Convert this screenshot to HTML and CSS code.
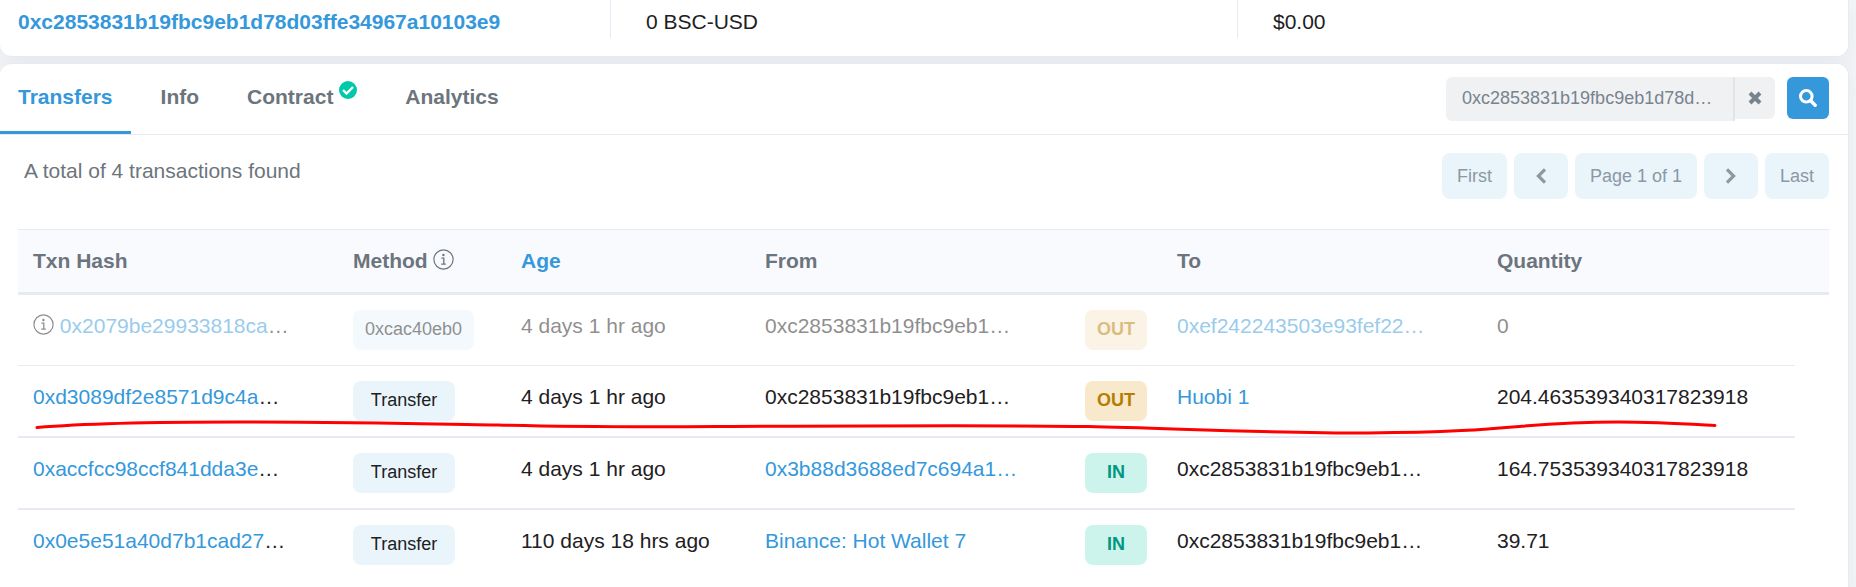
FILE: index.html
```html
<!DOCTYPE html>
<html lang="en">
<head>
  <meta charset="UTF-8">
  <meta name="viewport" content="width=device-width, initial-scale=1.0">
  <title>BSC-USD Token Transfers</title>
  <link rel="stylesheet" href="styles.css">
</head>
<body>
  <svg class="sprite" aria-hidden="true">
    <symbol id="icon-info" viewBox="0 0 21 21">
      <circle cx="10.5" cy="10.5" r="9.6" fill="none" stroke="currentColor" stroke-width="1.2"/>
      <circle cx="10.4" cy="6" r="1.2" fill="currentColor"/>
      <path d="M8.4 9.2h2.4v5.800M8.200 15.200h4.600" fill="none" stroke="currentColor" stroke-width="1.3"/>
    </symbol>
  </svg>

  <div class="card summary">
    <div class="summary-item"><a class="holder" href="#">0xc2853831b19fbc9eb1d78d03ffe34967a10103e9</a></div>
    <div class="summary-item">0 BSC-USD</div>
    <div class="summary-item">$0.00</div>
  </div>

  <div class="card main">
    <div class="card-header">
      <nav class="tabs">
        <a class="tab active" href="#transfers">Transfers</a>
        <a class="tab" href="#info">Info</a>
        <a class="tab" href="#contract">Contract
          <svg class="verified" viewBox="0 0 18 18" aria-hidden="true">
            <circle cx="9" cy="9" r="9" fill="#00c9a7"/>
            <path d="M4 9l3.500 3.500 6.500-6.500" fill="none" stroke="#fff" stroke-width="2.4"/>
          </svg>
        </a>
        <a class="tab" href="#analytics">Analytics</a>
      </nav>
      <form class="search">
        <input class="search-input" type="text" aria-label="Filter by address" value="0xc2853831b19fbc9eb1d78d…">
        <button class="search-clear" type="button" aria-label="Clear">
          <svg width="16" height="16" viewBox="0 0 16 16"><path d="M3 3l10 10M13 3L3 13" stroke="currentColor" stroke-width="4"/></svg>
        </button>
        <button class="search-submit" type="button" aria-label="Search">
          <svg width="18" height="18" viewBox="0 0 18 18" fill="none" stroke="currentColor">
            <circle cx="7.3" cy="7.3" r="5.8" stroke-width="3"/>
            <path d="M11.5 11.5l4.700 4.700" stroke-width="3.4" stroke-linecap="round"/>
          </svg>
        </button>
      </form>
    </div>

    <div class="card-body">
      <div class="toolbar">
        <p class="total">A total of 4 transactions found</p>
        <div class="pager">
          <button class="page-btn" type="button" disabled>First</button>
          <button class="page-btn page-arrow" type="button" aria-label="Previous" disabled>
            <svg width="12" height="16" viewBox="0 0 12 16"><path d="M10 1.4L3.400 8l6.600 6.600" fill="none" stroke="currentColor" stroke-width="3.2"/></svg>
          </button>
          <span class="page-btn">Page 1 of 1</span>
          <button class="page-btn page-arrow" type="button" aria-label="Next" disabled>
            <svg width="12" height="16" viewBox="0 0 12 16"><path d="M2 1.4L8.600 8l-6.600 6.600" fill="none" stroke="currentColor" stroke-width="3.2"/></svg>
          </button>
          <button class="page-btn" type="button" disabled>Last</button>
        </div>
      </div>

      <div class="table-wrap">
        <table class="transfers">
          <colgroup>
            <col class="col-address">
            <col class="col-method">
            <col class="col-age">
            <col class="col-address">
            <col class="col-direction">
            <col class="col-address">
            <col class="col-quantity">
            <col class="col-action">
          </colgroup>
          <thead>
            <tr>
              <th>Txn Hash</th>
              <th>Method <svg class="info"><use href="#icon-info"/></svg></th>
              <th><a href="#">Age</a></th>
              <th>From</th>
              <th></th>
              <th>To</th>
              <th>Quantity</th>
              <th></th>
            </tr>
          </thead>
          <tbody>
            <tr class="faded">
              <td><svg class="info"><use href="#icon-info"/></svg> <a href="#">0x2079be29933818ca</a>…</td>
              <td><span class="method">0xcac40eb0</span></td>
              <td>4 days 1 hr ago</td>
              <td>0xc2853831b19fbc9eb1…</td>
              <td><span class="direction out">OUT</span></td>
              <td><a href="#">0xef242243503e93fef22…</a></td>
              <td>0</td>
            </tr>
            <tr>
              <td><a href="#">0xd3089df2e8571d9c4a</a>…</td>
              <td><span class="method">Transfer</span></td>
              <td>4 days 1 hr ago</td>
              <td>0xc2853831b19fbc9eb1…</td>
              <td><span class="direction out">OUT</span></td>
              <td><a href="#">Huobi 1</a></td>
              <td>204.463539340317823918</td>
            </tr>
            <tr>
              <td><a href="#">0xaccfcc98ccf841dda3e</a>…</td>
              <td><span class="method">Transfer</span></td>
              <td>4 days 1 hr ago</td>
              <td><a href="#">0x3b88d3688ed7c694a1…</a></td>
              <td><span class="direction in">IN</span></td>
              <td>0xc2853831b19fbc9eb1…</td>
              <td>164.753539340317823918</td>
            </tr>
            <tr>
              <td><a href="#">0x0e5e51a40d7b1cad27</a>…</td>
              <td><span class="method">Transfer</span></td>
              <td>110 days 18 hrs ago</td>
              <td><a href="#">Binance: Hot Wallet 7</a></td>
              <td><span class="direction in">IN</span></td>
              <td>0xc2853831b19fbc9eb1…</td>
              <td>39.71</td>
            </tr>
          </tbody>
        </table>
        <svg class="underline" viewBox="0 0 1811 20" preserveAspectRatio="none" aria-hidden="true">
          <path d="M19 10.5C60 7 130 5 220 5C330 5 420 7 480 8C560 10 620 10 700 9.5C820 9 980 8 1070 9.5C1160 11.500 1250 16 1350 16C1500 15 1500 5 1600 5C1640 5 1670 7 1697 8.500" fill="none" stroke="#f00" stroke-width="3" stroke-linecap="round"/>
        </svg>
      </div>
    </div>
  </div>
</body>
</html>
```
FILE: styles.css
```css
* {
  box-sizing: border-box;
}
body {
  display: flex;
  flex-direction: column;
  gap: 6px;
  min-height: 100vh;
  margin: 0;
  padding-right: 7px;
  background: #f3f4f7;
  color: #1e2022;
  font-family: "Liberation Sans", Arial, sans-serif;
  font-size: 21px;
  line-height: 32px;
}
a {
  color: #3498db;
  text-decoration: none;
}
button, input {
  margin: 0;
  border: 0;
  font-family: inherit;
  font-size: 18px;
}
.sprite {
  position: absolute;
  width: 0;
  height: 0;
}
.card {
  background: #fff;
  border: 1px solid #e7eaf3;
  border-left: 0;
  border-radius: 12px;
  box-shadow: 0 8px 18px rgba(189, 197, 209, 0.2);
}

/* holder summary */
.summary {
  display: grid;
  grid-template-columns: 610fr 627fr 611fr;
  padding-bottom: 18px;
  border-top: 0;
  border-top-left-radius: 0;
  border-top-right-radius: 0;
}
.summary-item {
  padding: 6px 18px 0 35px;
  border-left: 1px solid #e7eaf3;
}
.summary-item:first-child {
  padding-left: 18px;
  border-left: 0;
}
.holder {
  font-weight: bold;
}

/* tabs and search */
.main {
  flex: 1;
  border-bottom: 0;
  border-bottom-left-radius: 0;
  border-bottom-right-radius: 0;
}
.card-header {
  display: flex;
  justify-content: space-between;
  border-bottom: 1px solid #e7eaf3;
}
.tabs {
  display: flex;
  gap: 12px;
}
.tab {
  padding: 17px 18px 18px;
  border-bottom: 3px solid transparent;
  color: #6c757d;
  font-weight: bold;
}
.tab.active {
  border-color: #3498db;
  color: #3498db;
}
.verified {
  width: 18px;
  height: 18px;
  vertical-align: 5px;
}
.search {
  display: flex;
  align-items: flex-start;
  padding: 13px 19px 0 0;
}
.search-input {
  width: 289px;
  height: 44px;
  padding: 0 16px 2px;
  background: #f0f1f3;
  border-right: 2px solid #e2e4e9;
  border-radius: 6px 0 0 6px;
  color: #77838f;
}
.search-clear, .search-submit {
  display: flex;
  align-items: center;
  justify-content: center;
  width: 42px;
  height: 42px;
  padding: 0;
  cursor: pointer;
}
.search-clear {
  width: 40px;
  margin-right: 12px;
  background: #f0f1f3;
  border-radius: 0 6px 6px 0;
  color: #77838f;
}
.search-submit {
  background: #3498db;
  border-radius: 6px;
  color: #fff;
}

/* total and pagination */
.card-body {
  padding: 18px 19px 0 18px;
}
.toolbar {
  display: flex;
  justify-content: space-between;
  margin-bottom: 30px;
}
.total {
  margin: 0;
  padding: 2px 6px;
  color: #6c757d;
}
.pager {
  display: flex;
  gap: 7px;
}
.page-btn {
  display: flex;
  align-items: center;
  justify-content: center;
  height: 46px;
  padding: 0 15px;
  background: #e9f5fb;
  border-radius: 8px;
  color: #8c98a4;
  font-size: 18px;
}
.page-arrow {
  width: 54px;
}

/* transfers table */
.table-wrap {
  position: relative;
}
.transfers {
  width: 100%;
  border-spacing: 0;
  table-layout: fixed;
}
.col-address {
  width: 320px;
}
.col-method {
  width: 168px;
}
.col-age {
  width: 244px;
}
.col-direction {
  width: 92px;
}
.col-quantity {
  width: 313px;
}
.col-action {
  width: 34px;
}
.transfers th, .transfers td {
  padding: 15px;
  text-align: left;
  vertical-align: top;
  white-space: nowrap;
}
.transfers th {
  background: #f9fafe;
  border-top: 1px solid #e7eaf3;
  border-bottom: 3px solid #e7eaf3;
  color: #6c757d;
}
.transfers td {
  border-top: 2px solid #e7eaf3;
}
.transfers tr:nth-child(2) td {
  border-top-width: 1px;
}
.transfers .faded td {
  border-top: 0;
  opacity: 0.5;
}
.info {
  width: 21px;
  height: 21px;
  vertical-align: -2px;
}
.method, .direction {
  display: inline-block;
  padding: 4px 12px 6px;
  border-radius: 8px;
  font-size: 18px;
  line-height: 30px;
  text-align: center;
  vertical-align: top;
}
.method {
  min-width: 102px;
  background: #e9f5fb;
}
.direction {
  min-width: 62px;
  font-weight: bold;
}
.out {
  background: #f8e9cd;
  color: #b47d00;
}
.in {
  background: #ccf4ed;
  color: #02977e;
}

/* pen stroke under the second row */
.underline {
  position: absolute;
  top: 188px;
  left: 0;
  width: 100%;
  height: 20px;
  pointer-events: none;
}
```
